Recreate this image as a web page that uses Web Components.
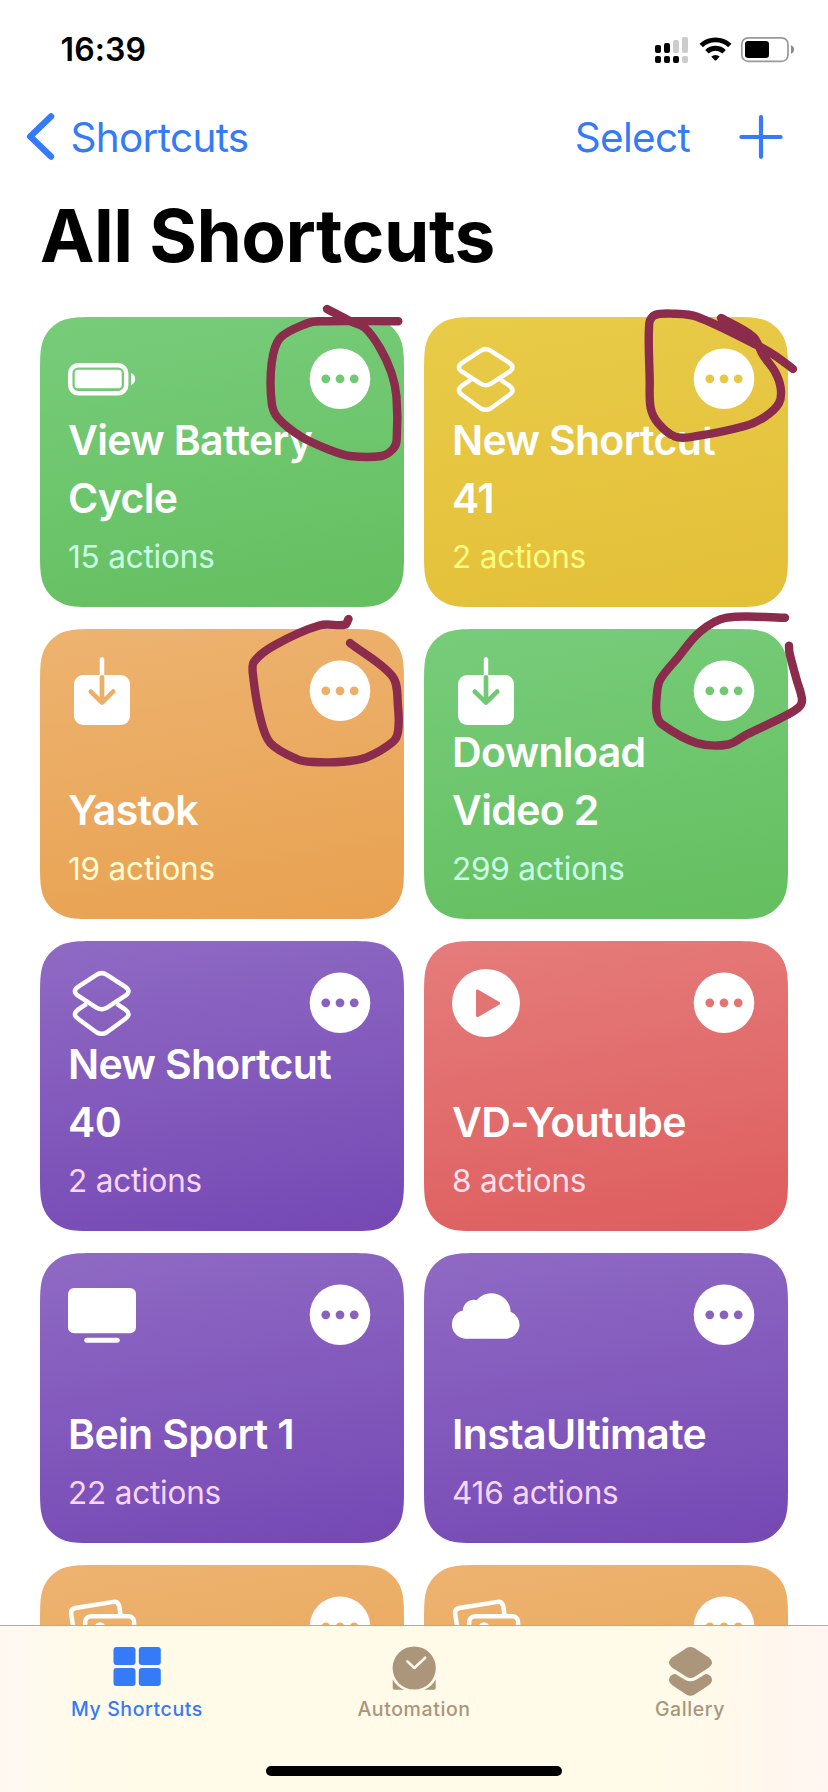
<!DOCTYPE html>
<html lang="en">
<head>
<meta charset="utf-8">
<title>All Shortcuts</title>
<style>
    body {
        margin: 0;
        width: 828px;
        height: 1792px;
        overflow: hidden;
        position: relative;
        background: #fff;
        font-family: Inter, "Liberation Sans", sans-serif;
    }
</style>
</head>
<body>
<shortcuts-screen>
    <status-bar slot="top">16:39</status-bar>
    <nav-bar slot="top">
        <span slot="back">Shortcuts</span>
        <span slot="action">Select</span>
    </nav-bar>
    <span slot="title">All Shortcuts</span>

    <shortcut-card color="green" icon="battery">View Battery Cycle<span slot="count">15 actions</span></shortcut-card>
    <shortcut-card color="yellow" icon="layers">New Shortcut 41<span slot="count">2 actions</span></shortcut-card>
    <shortcut-card color="orange" icon="download">Yastok<span slot="count">19 actions</span></shortcut-card>
    <shortcut-card color="green" icon="download">Download Video 2<span slot="count">299 actions</span></shortcut-card>
    <shortcut-card color="purple" icon="layers">New Shortcut 40<span slot="count">2 actions</span></shortcut-card>
    <shortcut-card color="red" icon="play">VD-Youtube<span slot="count">8 actions</span></shortcut-card>
    <shortcut-card color="purple" icon="tv">Bein Sport 1<span slot="count">22 actions</span></shortcut-card>
    <shortcut-card color="purple" icon="cloud">InstaUltimate<span slot="count">416 actions</span></shortcut-card>
    <shortcut-card color="orange" icon="photos"></shortcut-card>
    <shortcut-card color="orange" icon="photos"></shortcut-card>

    <tab-bar slot="bottom">
        <tab-item icon="grid" active>My Shortcuts</tab-item>
        <tab-item icon="clock">Automation</tab-item>
        <tab-item icon="gallery">Gallery</tab-item>
    </tab-bar>
</shortcuts-screen>
<ink-layer></ink-layer>

<script>
class BaseElement extends HTMLElement {
    constructor() {
        super();
        this.attachShadow({ mode: "open" });
    }
    connectedCallback() {
        const template = document.createElement('template');
        template.innerHTML = `${this.getTemplate()}<style>${this.getStyles()}</style>`;
        this.shadowRoot.appendChild(template.content.cloneNode(true));
    }
}

class ShortcutsScreen extends BaseElement {
    getTemplate() {
        return `
            <slot name="top"></slot>
            <h1><slot name="title"></slot></h1>
            <main><slot></slot></main>
            <slot name="bottom"></slot>
        `;
    }
    getStyles() {
        return `
            :host {
                display: flex;
                flex-direction: column;
                height: 1792px;
            }
            h1 {
                margin: 0;
                padding: 0 40px;
                height: 129px;
                box-sizing: border-box;
                font-size: 73px;
                font-weight: 700;
                line-height: 96px;
                letter-spacing: -.55px;
            }
            main {
                flex: 1;
                min-height: 0;
                overflow: hidden;
                padding: 0 40px;
                display: grid;
                grid-template-columns: 364px 364px;
                grid-auto-rows: 290px;
                gap: 22px 20px;
            }
        `;
    }
}

class StatusBar extends BaseElement {
    getTemplate() {
        return `
            <time><slot></slot></time>
            <svg width="140" height="30" viewBox="655 35 140 30">
                <g fill="#000">
                    <rect x="655" y="45" width="6" height="8" rx="2"/>
                    <rect x="664" y="43" width="6" height="10" rx="2"/>
                    <rect x="655" y="56" width="6" height="7" rx="2"/>
                    <rect x="664" y="56" width="6" height="7" rx="2"/>
                    <rect x="673" y="56" width="6" height="7" rx="2"/>
                </g>
                <g fill="#ccc">
                    <rect x="673" y="40" width="6" height="13" rx="2"/>
                    <rect x="682" y="37" width="6" height="16" rx="2"/>
                    <rect x="682" y="56" width="6" height="7" rx="2"/>
                </g>
                <g fill="none" stroke="#000" stroke-width="4.8">
                    <path d="M701.200 45.600a20.800 20.800 0 0 1 28.600 0"/>
                    <path d="M706.900 51.700a12.400 12.400 0 0 1 17.200 0"/>
                </g>
                <path d="M711.300 56.500a6.300 6.300 0 0 1 8.400 0l-3.400 3.700q-.8.8-1.600 0z"/>
                <rect x="741.8" y="37.8" width="46.2" height="23.6" rx="6.5" fill="none" stroke="#999" stroke-width="1.7"/>
                <rect x="745" y="41" width="24" height="17" rx="3.2"/>
                <path d="M791 45.3q3 1 3 4.2t-3 4.2z" fill="#8a8a8a"/>
            </svg>
        `;
    }
    getStyles() {
        return `
            :host {
                display: flex;
                justify-content: space-between;
                align-items: center;
                height: 100px;
                box-sizing: border-box;
                padding: 0 33px 0 60.5px;
            }
            time {
                margin-top: -1px;
                font-size: 32px;
                font-weight: 600;
                letter-spacing: .1px;
            }
        `;
    }
}

class NavBar extends BaseElement {
    getTemplate() {
        return `
            <svg class="chevron" width="30" height="50" viewBox="26 112 30 50">
                <path d="M51 116.500L30.200 136.500L51 156.500" stroke-width="6.4"/>
            </svg>
            <slot name="back"></slot>
            <i></i>
            <slot name="action"></slot>
            <svg class="plus" width="46" height="46" viewBox="-23 -23 46 46">
                <path d="M-19.6 0H19.6M0 -19.8V19.8" stroke-width="4.2"/>
            </svg>
        `;
    }
    getStyles() {
        return `
            :host {
                display: flex;
                align-items: center;
                height: 88px;
                box-sizing: border-box;
                padding: 0 44.5px 14px 26px;
                color: #357af6;
                font-size: 40.5px;
                letter-spacing: -.7px;
            }
            i { flex: 1; }
            svg {
                fill: none;
                stroke: currentColor;
                stroke-linecap: round;
                stroke-linejoin: round;
            }
            .chevron { margin-right: 14.5px; }
            .plus { margin-left: 47.5px; }
        `;
    }
}

const ICONS = {
    battery: `
        <rect x="6.2" y="24.2" width="56" height="28" rx="8" class="line"/>
        <rect x="10.7" y="28.7" width="47" height="18.6" rx="3.4"/>
        <path d="M67 32q4.2 1.6 4.2 6.1t-4.2 6.1z"/>`,
    layers: `
        <path class="line" d="M32.5 9.8Q37.7 6.4 42.9 9.8L61.4 21.8Q67.6 26.2 61.4 30.7L43 42.6Q37.7 46 32.4 42.6L14 30.7Q7.8 26.2 14 21.8Z"/>
        <path class="line" d="M22.6 38.8L14 44.7Q7.8 49.2 14 53.8L32.4 67.2Q37.7 70.4 43 67.2L61.4 53.8Q67.6 49.2 61.4 44.7L52.8 38.8"/>`,
    download: `
        <rect x="10" y="22" width="56" height="50" rx="9"/>
        <path class="line" d="M38 6.6V22" stroke-linecap="round"/>
        <path class="cut" d="M38 24.3V49.6M26.8 38.6L38 49.6L49.2 38.6"/>`,
    play: `
        <circle cx="38" cy="38" r="34"/>
        <path class="cut solid" d="M29.5 26V50.6L50.7 38.2Z"/>`,
    tv: `
        <rect x="4" y="11" width="68" height="45.3" rx="6"/>
        <rect x="20.3" y="60.7" width="35.4" height="5" rx="2.5"/>`,
    cloud: `
        <path d="M18.5 61.7A14.3 14.3 0 0 1 14.8 33.5A11 11 0 0 1 28.5 23.2A19.3 19.3 0 0 1 62.700 34.700A14 14 0 0 1 58 61.7Z"/>`,
    photos: `
        <path class="line" d="M11 50L7.2 25Q6.4 20 11.2 19L49.5 12.9Q54 12.4 55.2 17L56.6 26"/>
        <rect class="line" x="21.2" y="27.2" width="48.9" height="38" rx="6"/>
        <circle cx="36" cy="38.6" r="5.3"/>`
};

// top and bottom of the gradient, then the colour of the action count
const COLORS = {
    green: ['#77cc7a', '#64bf5f', '#c9ffe8'],
    yellow: ['#e8cb48', '#e4bf38', '#fdfc82'],
    orange: ['#edb370', '#e8a150', '#fffdcf'],
    purple: ['#8f6ac4', '#7548b4', '#f7d7ff'],
    red: ['#e57c7b', '#de5d5e', '#ffe1f0']
};

// continuous corner outline
function roundedPath(w, h, r) {
    const k = [1.528665, 1.088493, .868407, .631494, .074911, .372824, .169059].map(n => n * r);
    const [a, b, c, d, e, f, g] = k;
    return `M${a} 0L${w - a} 0C${w - b} 0 ${w - c} 0 ${w - d} ${e}C${w - f} ${g} ${w - g} ${f} ${w - e} ${d}C${w} ${c} ${w} ${b} ${w} ${a}
        L${w} ${h - a}C${w} ${h - b} ${w} ${h - c} ${w - e} ${h - d}C${w - g} ${h - f} ${w - f} ${h - g} ${w - d} ${h - e}C${w - c} ${h} ${w - b} ${h} ${w - a} ${h}
        L${a} ${h}C${b} ${h} ${c} ${h} ${d} ${h - e}C${f} ${h - g} ${g} ${h - f} ${e} ${h - d}C0 ${h - c} 0 ${h - b} 0 ${h - a}
        L0 ${a}C0 ${b} 0 ${c} ${e} ${d}C${g} ${f} ${f} ${g} ${d} ${e}C${c} 0 ${b} 0 ${a} 0Z`.replace(/\s+/g, ' ');
}

class ShortcutCard extends BaseElement {
    getTemplate() {
        return `
            <header>
                <svg width="76" height="76" viewBox="0 0 76 76">${ICONS[this.getAttribute('icon')]}</svg>
                <svg width="62" height="62" viewBox="0 0 62 62">
                    <circle cx="31" cy="30.8" r="30.3"/>
                    <g class="dots">
                        <circle cx="16.8" cy="30.8" r="4.4"/>
                        <circle cx="31" cy="30.8" r="4.4"/>
                        <circle cx="45.2" cy="30.8" r="4.4"/>
                    </g>
                </svg>
            </header>
            <h2><slot></slot></h2>
            <p><slot name="count"></slot></p>
        `;
    }
    getStyles() {
        const [from, to, text] = COLORS[this.getAttribute('color')];
        return `
            :host {
                --tint: color-mix(in srgb, ${from} 75%, ${to});
                display: flex;
                flex-direction: column;
                height: 290px;
                box-sizing: border-box;
                padding: 24px 28px 31px;
                background: linear-gradient(170deg, ${from}, ${to});
                clip-path: path("${roundedPath(364, 290, 38)}");
                color: #fff;
            }
            header {
                display: flex;
                justify-content: space-between;
                align-items: center;
                height: 76px;
                margin: 0 5px -24px -4px;
            }
            svg { fill: #fff; }
            .line { fill: none; stroke: #fff; stroke-width: 4.5; }
            .cut { fill: none; stroke: var(--tint); stroke-width: 4.7; stroke-linecap: round; stroke-linejoin: round; }
            .solid { fill: var(--tint); stroke-width: 3; }
            .dots { fill: var(--tint); }
            h2 {
                margin: auto 0 11.5px;
                font-size: 41px;
                font-weight: 600;
                line-height: 58px;
                letter-spacing: -.65px;
            }
            p {
                margin: 0;
                color: ${text};
                font-size: 31.5px;
                line-height: 38px;
                letter-spacing: -.2px;
            }
        `;
    }
}

class TabBar extends BaseElement {
    getTemplate() {
        return `
            <nav><slot></slot></nav>
            <div></div>
        `;
    }
    getStyles() {
        return `
            :host {
                display: flex;
                flex-direction: column;
                align-items: center;
                justify-content: space-between;
                height: 167px;
                box-sizing: border-box;
                padding-bottom: 16px;
                border-top: 1px solid #aeaba6;
                background: linear-gradient(90deg, #fff8f2, #fffaeb 8%, #fffbe8 18%, #fffbe8 75%, #fff9ea 87%, #fff6f2);
            }
            nav { display: flex; width: 100%; }
            div {
                width: 296px;
                height: 10px;
                border-radius: 5px;
                background: #000;
            }
        `;
    }
}

const TAB_ICONS = {
    grid: `
        <rect x="-.5" y="1" width="22" height="18" rx="3"/>
        <rect x="24.8" y="1" width="22" height="18" rx="3"/>
        <rect x="-.5" y="22" width="22" height="18" rx="3"/>
        <rect x="24.8" y="22" width="22" height="18" rx="3"/>`,
    clock: `
        <circle cx="24.2" cy="22" r="21.6"/>
        <path d="M2.700 33.500a24.400 24.400 0 0 0 11.500 10.300H4.700q-2 0-2-2zM45.700 33.500a24.400 24.400 0 0 1-11.500 10.300H43.700q2 0 2-2z"/>
        <path d="M17.4 15.4L24.3 22L35.200 11.700" fill="none" stroke="#fffbe9" stroke-width="2.6" stroke-linecap="round" stroke-linejoin="round"/>`,
    gallery: `
        <path d="M20.3 2.3Q24.5 -.1 28.7 2.3L43 11.5Q49 16.500 43 21.500L28.700 30.800Q24.500 33.200 20.300 30.800L6 21.500Q0 16.500 6 11.500Z"/>
        <path d="M9 27.800L19.300 34Q24.500 36.600 29.700 34L40 27.800Q43 28.600 44.700 30.200Q48 35 43 39L28.700 48.500Q24.500 51 20.300 48.500L6 39Q1 35 4.300 30.200Q6 28.600 9 27.800Z"/>`
};

class TabItem extends BaseElement {
    getTemplate() {
        return `
            <svg width="49" height="51" viewBox="0 0 49 51">${TAB_ICONS[this.getAttribute('icon')]}</svg>
            <span><slot></slot></span>
        `;
    }
    getStyles() {
        return `
            :host {
                flex: 1;
                display: flex;
                flex-direction: column;
                align-items: center;
                padding-top: 20px;
                color: #ab957b;
                font-size: 19.5px;
                font-weight: 500;
                letter-spacing: .6px;
            }
            :host([active]) { color: #357af6; }
            svg { fill: currentColor; overflow: visible; }
            span { line-height: 24px; }
            :host([active]) span { margin-left: -2px; }
        `;
    }
}

// pen strokes drawn over the screen, each a list of x,y points
const STROKES = [
    [327,309, 350,321, 365,328, 380,348, 391.5,373, 396.5,397, 396.7,440, 393,449, 381.7,456, 350,456, 330,450, 301.7,437, 278,418, 271.7,403, 271.7,363, 280,338, 306.7,323.5, 320,321.3, 398.3,321.3],
    [721,318, 753,336.7, 763,355, 775,371.7, 780.7,388, 779,403, 765,416.7, 745,426, 693,436.7, 675,436.7, 658,423, 650.7,408, 649.7,380, 649.3,323, 655,315, 673,313.7, 697,316.7, 756.7,345, 776.7,356.7, 793,369],
    [348.5,619, 345,624.7, 320,625.3, 275,645, 254,661.7, 253,675, 260,716.7, 270,742.7, 296.7,759, 313,762, 343,761.7, 366.7,757.3, 393,741.7, 398,731.7, 398,706.7, 392.7,676.7, 350,643],
    [785,617.7, 726.7,617.7, 700,631.7, 678,657.5, 660,680, 656.7,696.7, 656.7,714, 661.7,724, 696.7,743, 728,744.5, 746.7,734.5, 780,718.5, 798,708, 802,700, 796.7,680, 789.5,653, 789,645.7]
];

class InkLayer extends BaseElement {
    smooth(list) {
        const p = [];
        for (let i = 0; i < list.length; i += 2) p.push([list[i], list[i + 1]]);
        let d = `M${p[0]}`;
        for (let i = 0; i < p.length - 1; i++) {
            const a = p[i], b = p[i + 1];
            const prev = p[i - 1] || a, next = p[i + 2] || b;
            const len = Math.hypot(b[0] - a[0], b[1] - a[1]);
            const t1 = len / (len + Math.hypot(a[0] - prev[0], a[1] - prev[1])) / 3;
            const t2 = len / (len + Math.hypot(next[0] - b[0], next[1] - b[1])) / 3;
            d += `C${a[0] + (b[0] - prev[0]) * t1} ${a[1] + (b[1] - prev[1]) * t1} ${b[0] - (next[0] - a[0]) * t2} ${b[1] - (next[1] - a[1]) * t2} ${b}`;
        }
        return d;
    }
    getTemplate() {
        return `
            <svg width="828" height="1792" viewBox="0 0 828 1792">
                ${STROKES.map(s => `<path d="${this.smooth(s)}"/>`).join('')}
            </svg>
        `;
    }
    getStyles() {
        return `
            :host {
                position: absolute;
                inset: 0;
                pointer-events: none;
            }
            svg { display: block; }
            path {
                fill: none;
                stroke: #8b2c4d;
                stroke-width: 8.4;
                stroke-linecap: round;
                stroke-linejoin: round;
            }
        `;
    }
}

customElements.define("shortcuts-screen", ShortcutsScreen);
customElements.define("status-bar", StatusBar);
customElements.define("nav-bar", NavBar);
customElements.define("shortcut-card", ShortcutCard);
customElements.define("tab-bar", TabBar);
customElements.define("tab-item", TabItem);
customElements.define("ink-layer", InkLayer);
</script>
</body>
</html>
